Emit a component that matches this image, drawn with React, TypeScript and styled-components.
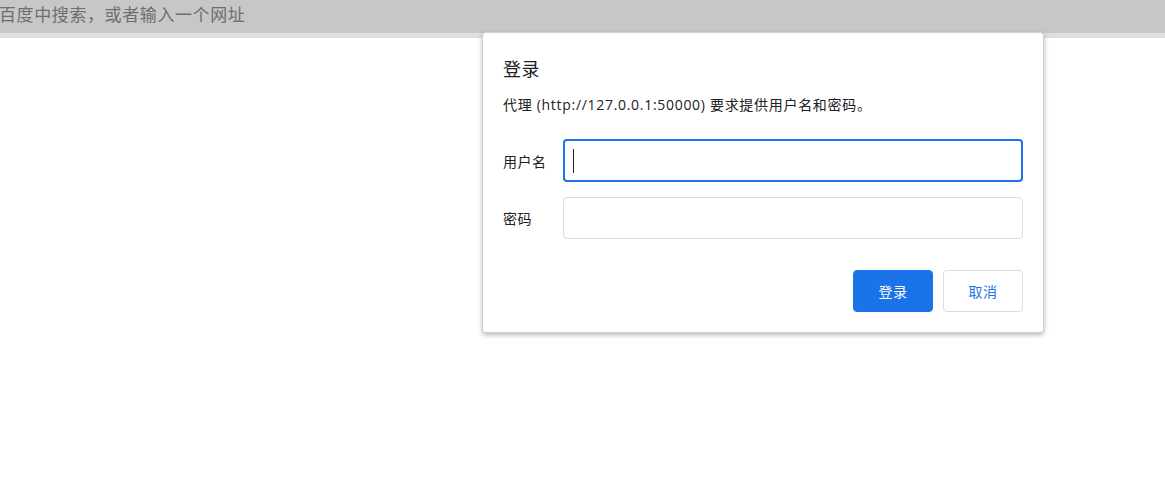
import React from "react";
import styled, { createGlobalStyle } from "styled-components";

const GlobalStyle = createGlobalStyle`
  html, body {
    margin: 0;
    padding: 0;
    background: #ffffff;
    font-family: "Open Sans", "Noto Sans CJK SC", sans-serif;
  }
`;

function App() {
  return (
    <Page>
      <GlobalStyle />
      <TopBar>
        <Omnibox>百度中搜索，或者输入一个网址</Omnibox>
      </TopBar>
      <Strip />
      <Dialog>
        <Title>登录</Title>
        <Description>代理 (http://127.0.0.1:50000) 要求提供用户名和密码。</Description>
        <Form>
          <Row>
            <Label>用户名</Label>
            <Field $focused>
              <Caret />
            </Field>
          </Row>
          <Row>
            <Label>密码</Label>
            <Field />
          </Row>
        </Form>
        <Actions>
          <Button $primary>登录</Button>
          <Button>取消</Button>
        </Actions>
      </Dialog>
    </Page>
  );
}

const Page = styled.div`
  position: relative;
  width: 1165px;
  height: 479px;
  overflow: hidden;
  background: #ffffff;
`;

const TopBar = styled.div`
  height: 33px;
  background: #c7c7c7;
  display: flex;
  align-items: flex-start;
`;

const Omnibox = styled.div`
  margin-left: -1px;
  margin-top: 3px;
  font-family: "Noto Sans CJK SC", sans-serif;
  font-size: 17px;
  letter-spacing: 0.6px;
  line-height: 22px;
  color: #6e6e6e;
  white-space: nowrap;
`;

const Strip = styled.div`
  height: 5px;
  background: #dfdfdf;
`;

// the auth prompt sits over the page
const Dialog = styled.div`
  position: absolute;
  left: 482px;
  top: 32px;
  width: 562px;
  height: 301px;
  box-sizing: border-box;
  padding: 25px 20px 20px 20px;
  background: #ffffff;
  border: 1px solid rgba(0, 0, 0, 0.18);
  border-radius: 4px;
  box-shadow: 0 2px 5px rgba(0, 0, 0, 0.28);
  display: flex;
  flex-direction: column;
`;

const Title = styled.div`
  font-size: 18px;
  letter-spacing: 0.5px;
  line-height: 22px;
  color: #202124;
`;

const Description = styled.div`
  margin-top: 16px;
  font-size: 14px;
  letter-spacing: 0.7px;
  line-height: 18px;
  color: #202124;
  white-space: nowrap;
`;

const Form = styled.div`
  margin-top: 25px;
  display: flex;
  flex-direction: column;
  gap: 15px;
`;

const Row = styled.div`
  display: flex;
  align-items: center;
`;

const Label = styled.div`
  width: 60px;
  font-size: 14px;
  letter-spacing: 0.5px;
  color: #202124;
`;

const Field = styled.div<{ $focused?: boolean }>`
  width: 460px;
  height: ${(p) => (p.$focused ? "43px" : "42px")};
  box-sizing: border-box;
  border-radius: 4px;
  border: ${(p) => (p.$focused ? "2px solid #1a73e8" : "1px solid #dadce0")};
  padding-left: 8px;
  display: flex;
  align-items: center;
  background: #ffffff;
`;

const Caret = styled.span`
  width: 1px;
  height: 24px;
  background: #202124;
`;

const Actions = styled.div`
  margin-top: auto;
  display: flex;
  justify-content: flex-end;
  gap: 10px;
`;

const Button = styled.button<{ $primary?: boolean }>`
  width: 80px;
  height: 42px;
  border-radius: 4px;
  box-sizing: border-box;
  font-family: "Noto Sans CJK SC", sans-serif;
  font-size: 14px;
  letter-spacing: 0.5px;
  cursor: pointer;
  background: ${(p) => (p.$primary ? "#1a73e8" : "#ffffff")};
  color: ${(p) => (p.$primary ? "#ffffff" : "#1a73e8")};
  border: ${(p) => (p.$primary ? "1px solid #1a73e8" : "1px solid #dadce0")};
`;

export default App;
